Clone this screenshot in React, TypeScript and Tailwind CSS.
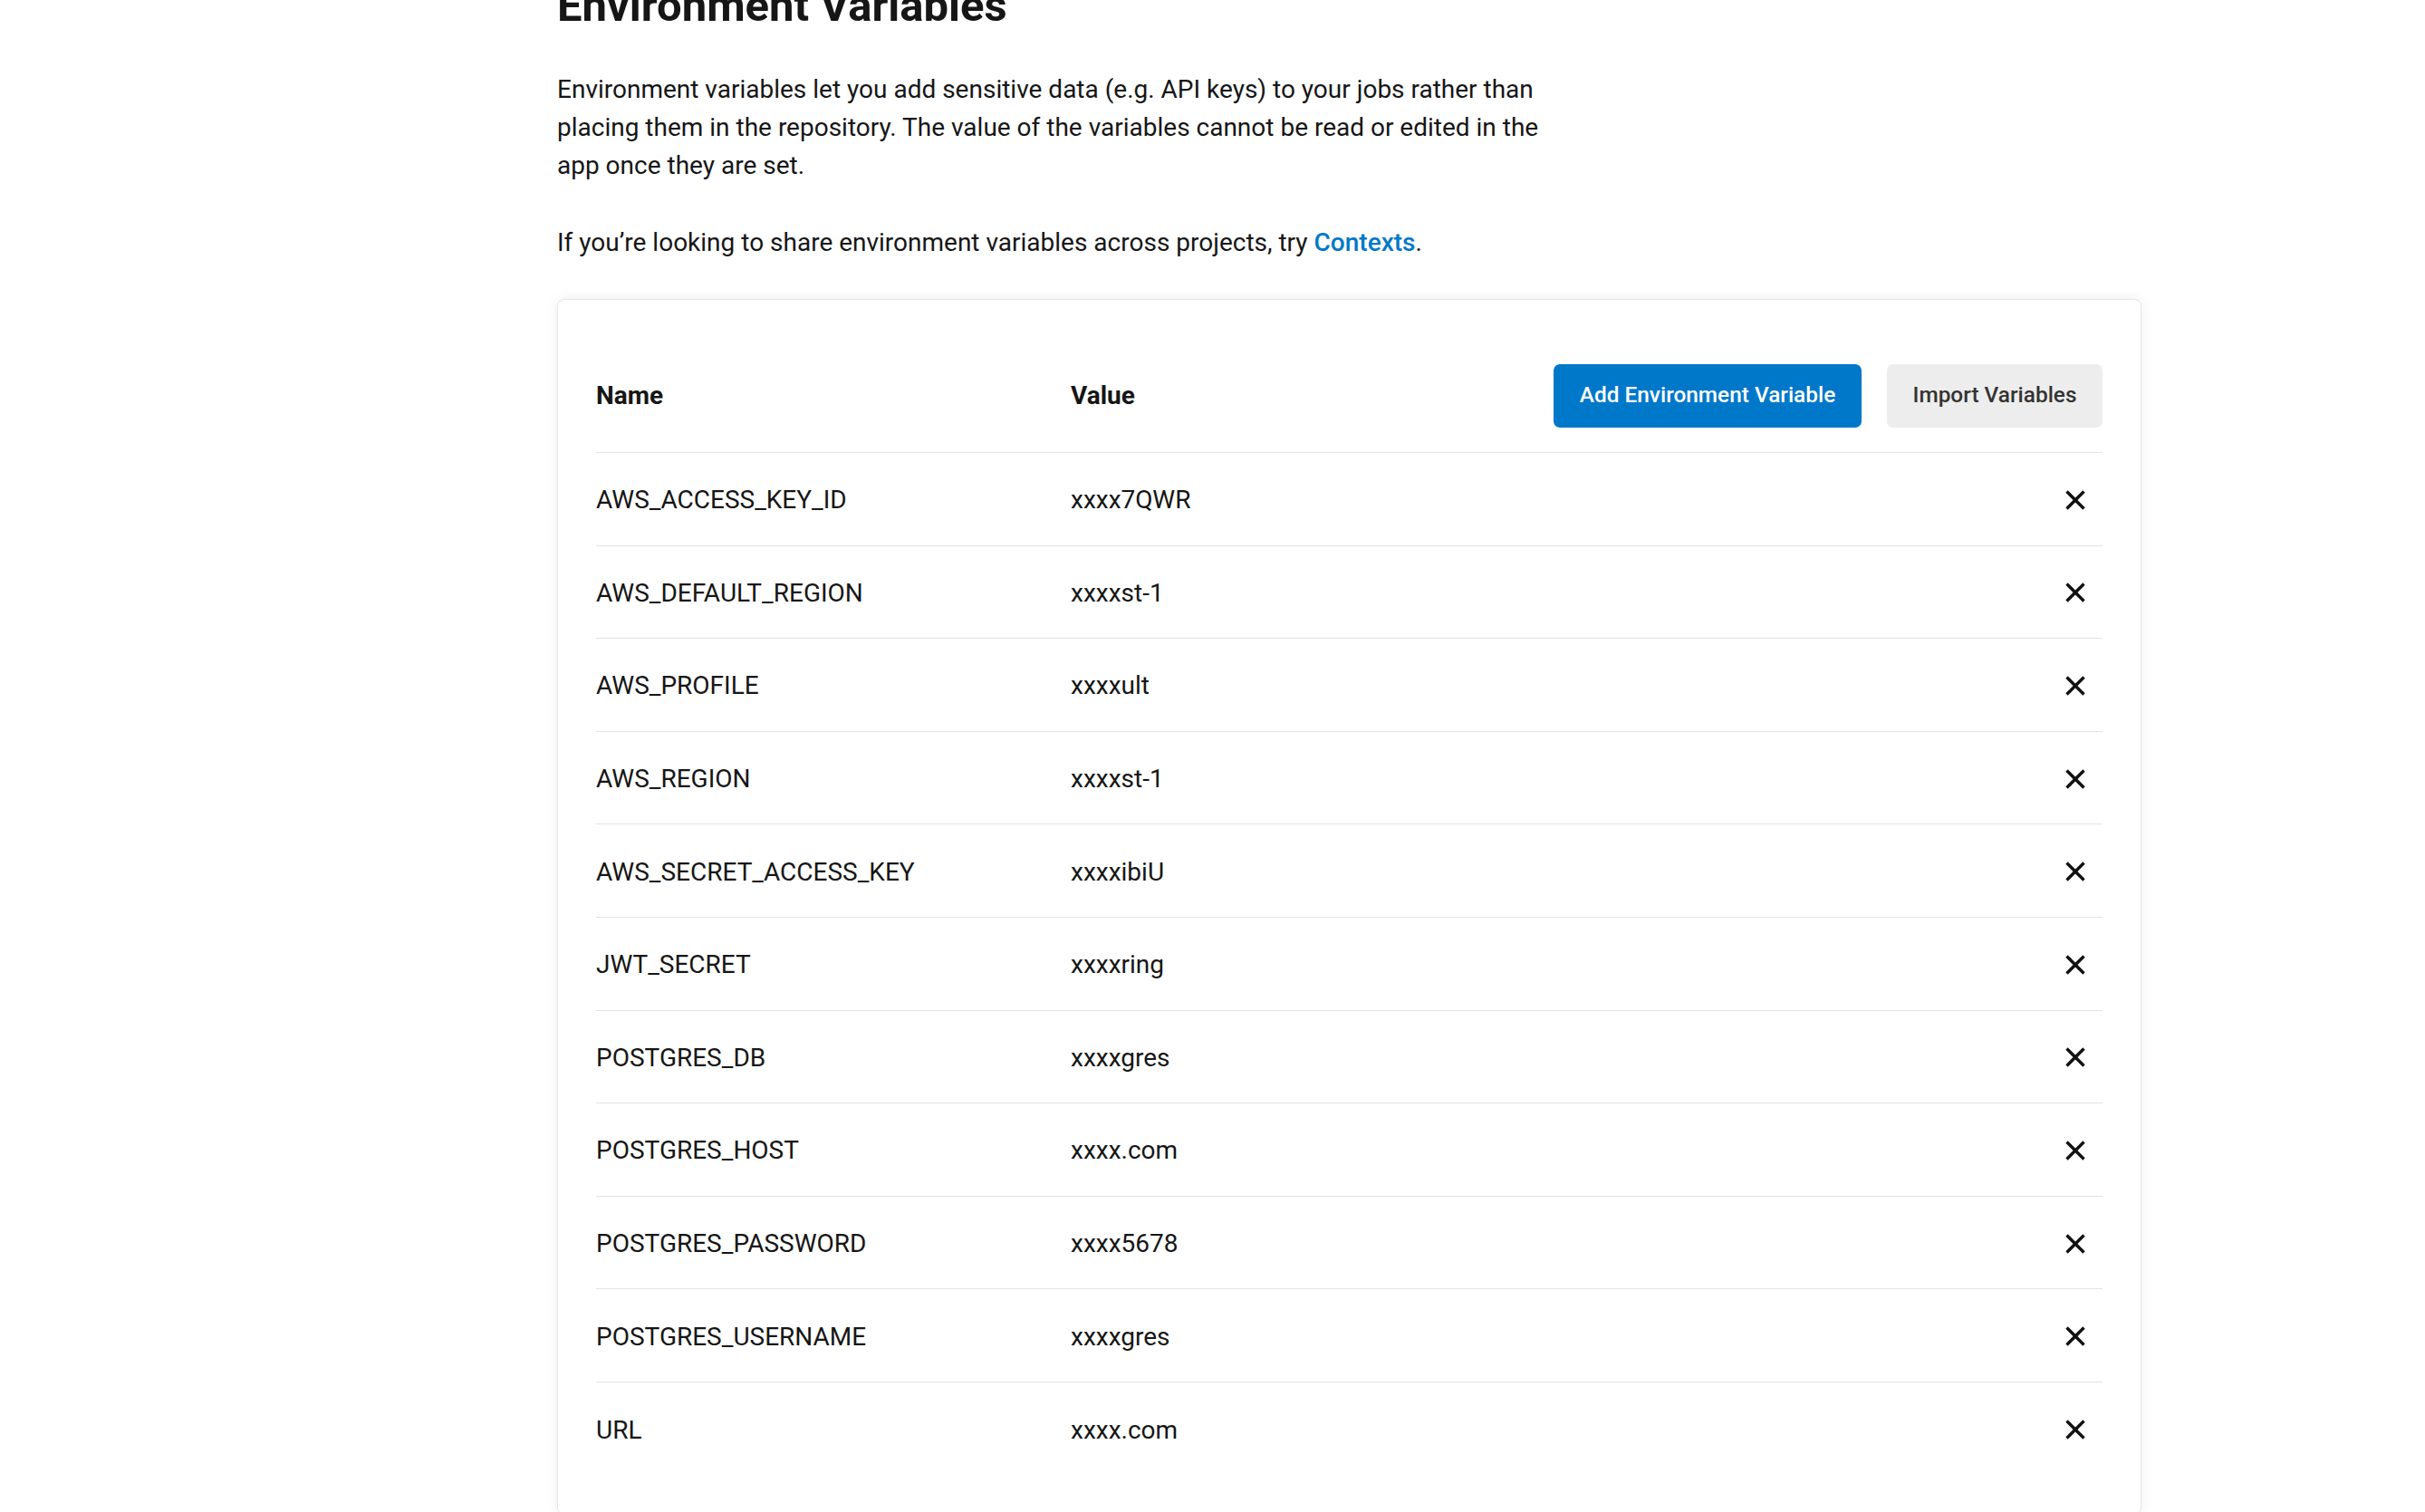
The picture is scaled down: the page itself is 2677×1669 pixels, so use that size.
import React from "react";

const rows: [string, string][] = [
  ["AWS_ACCESS_KEY_ID", "xxxx7QWR"],
  ["AWS_DEFAULT_REGION", "xxxxst-1"],
  ["AWS_PROFILE", "xxxxult"],
  ["AWS_REGION", "xxxxst-1"],
  ["AWS_SECRET_ACCESS_KEY", "xxxxibiU"],
  ["JWT_SECRET", "xxxxring"],
  ["POSTGRES_DB", "xxxxgres"],
  ["POSTGRES_HOST", "xxxx.com"],
  ["POSTGRES_PASSWORD", "xxxx5678"],
  ["POSTGRES_USERNAME", "xxxxgres"],
  ["URL", "xxxx.com"],
];

function XIcon() {
  return (
    <svg width="22" height="22" viewBox="0 0 22 22" fill="none">
      <line x1="1.5" y1="1.5" x2="20.5" y2="20.5" stroke="#111" strokeWidth="3.4" />
      <line x1="20.5" y1="1.5" x2="1.5" y2="20.5" stroke="#111" strokeWidth="3.4" />
    </svg>
  );
}

export default function App() {
  return (
    <div
      className="h-[1669px] w-full overflow-hidden bg-white text-[#161616]"
      style={{ fontFamily: "Roboto, 'Liberation Sans', sans-serif" }}
    >
      <div className="pl-[615px]">
        <div className="w-[1749px]">
          <h1 className="mt-[-23px] text-[49px] leading-[59px] font-bold text-[#161616]">
            Environment Variables
          </h1>
          <p className="mt-[42px] max-w-[1092px] text-[28px] leading-[42px]">
            Environment variables let you add sensitive data (e.g. API keys) to your jobs rather than
            placing them in the repository. The value of the variables cannot be read or edited in the
            app once they are set.
          </p>
          <p className="mt-[43px] text-[28px] leading-[42px]">
            If you’re looking to share environment variables across projects, try{" "}
            <a className="font-medium text-[#0078ca]">Contexts</a>.
          </p>

          <div className="mt-[41px] rounded-[8px] border border-[#e6e6e6] bg-white px-[42px] pt-[43px] pb-[42px] shadow-[0_0_14px_rgba(0,0,0,0.07)]">
            <div className="flex h-[126px] items-center border-b border-[#e3e3e3]">
              <div className="w-[524px] text-[28px] leading-[41px] font-bold">Name</div>
              <div className="flex-1 text-[28px] leading-[41px] font-bold">Value</div>
              <div className="flex items-center gap-[28px]">
                <button className="flex h-[70px] w-[340px] items-center justify-center rounded-[7px] bg-[#0078ca] text-[24.4px] font-medium text-white">
                  Add Environment Variable
                </button>
                <button className="flex h-[70px] w-[238px] items-center justify-center rounded-[7px] bg-[#ededed] text-[24.4px] font-medium text-[#333333]">
                  Import Variables
                </button>
              </div>
            </div>
            {rows.map(([name, value], i) => (
              <div
                key={name}
                className={
                  i === rows.length - 1
                    ? "flex h-[102.6px] items-center pt-[2px]"
                    : "flex h-[102.6px] items-center border-b border-[#e3e3e3] pt-[2px]"
                }
              >
                <div className="w-[524px] text-[28px] leading-[41px]">{name}</div>
                <div className="flex-1 text-[28px] leading-[41px]">{value}</div>
                <div className="flex w-[60px] items-center justify-center">
                  <XIcon />
                </div>
              </div>
            ))}
          </div>
        </div>
      </div>
    </div>
  );
}
